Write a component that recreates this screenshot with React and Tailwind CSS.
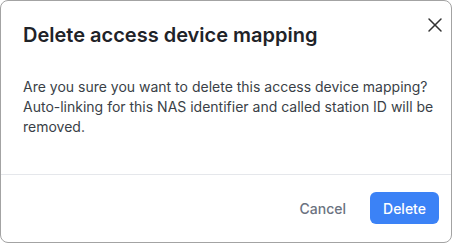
import React from "react";
import { X } from "lucide-react";

export default function App() {
  return (
    <div className="w-[454px] h-[244px] bg-white" style={{ fontFamily: "Inter, 'Noto Sans', sans-serif" }}>
      <div className="relative w-[452px] h-[243px] border border-[#a3a3a3] rounded-lg bg-white flex flex-col overflow-hidden">
        <button className="absolute top-[11.5px] left-[422px] text-[#333] p-0">
          <X size={24} strokeWidth={1.5} />
        </button>
        <div className="pl-[22px] pr-[8px] pt-[20px] pb-[37px]">
          <h2 className="text-[20px] leading-[28px] font-semibold text-[#1f2328]">
            Delete access device mapping
          </h2>
          <p className="mt-[28px] text-[14px] leading-[20px] text-[#3a3f47]">
            Are you sure you want to delete this access device mapping? Auto-linking for this NAS identifier and called
            station ID will be removed.
          </p>
        </div>
        <div className="border-t border-[#e5e7eb] flex justify-end items-start gap-3 pt-[17px] pr-3">
          <button className="h-8 px-3 text-[14px] font-medium text-[#6b7280] rounded-md">Cancel</button>
          <button className="h-8 w-[69px] text-[14px] font-medium text-white bg-[#3b82f6] rounded-md">
            Delete
          </button>
        </div>
      </div>
    </div>
  );
}
